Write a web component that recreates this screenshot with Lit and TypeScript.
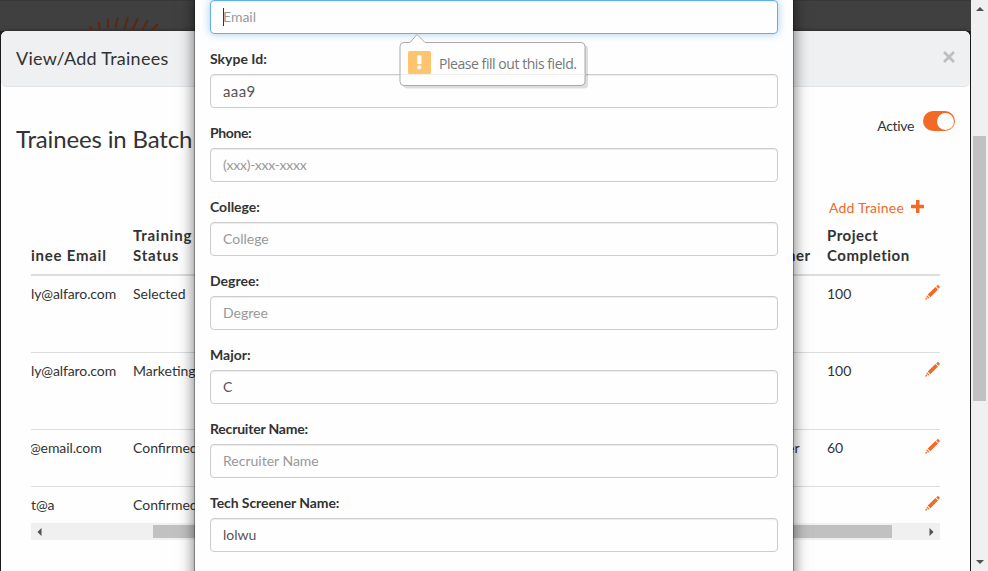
import { LitElement, html, css, svg } from "lit";
import { customElement } from "lit/decorators.js";

interface Field {
  label: string;
  value?: string;
  placeholder?: string;
  cls: string;
}

const FIELDS: Field[] = [
  { label: "Skype Id:", value: "aaa9", cls: "skype" },
  { label: "Phone:", placeholder: "(xxx)-xxx-xxxx", cls: "phone" },
  { label: "College:", placeholder: "College", cls: "college" },
  { label: "Degree:", placeholder: "Degree", cls: "degree" },
  { label: "Major:", value: "C", cls: "major" },
  { label: "Recruiter Name:", placeholder: "Recruiter Name", cls: "recruiter" },
  { label: "Tech Screener Name:", value: "lolwu", cls: "tech" },
];

const ROWS = [
  { email: "ly@alfaro.com", status: "Selected", screener: "", done: "100", cls: "r1" },
  { email: "ly@alfaro.com", status: "Marketing", screener: "", done: "100", cls: "r2" },
  { email: "@email.com", status: "Confirmed", screener: "er", done: "60", cls: "r3" },
  { email: "t@a", status: "Confirmed", screener: "", done: "", cls: "r4" },
];

const pencil = html`<svg class="pencil" width="15" height="15" viewBox="0 0 15 15">
  ${svg`<path fill="#f26a26" d="M11.200 1.400 12.300.3q.6-.5 1.100 0l1.200 1.200q.5.5 0 1.100L13.600 3.700zM10.400 2 13 4.600 5.300 12.200 2.700 9.600zM1.900 10.300 4.600 13 3.500 13.500 1.400 11.400zM1 12.200 2.700 13.900.2 14.800z"/>`}
</svg>`;

@customElement("app-root")
export class AppRoot extends LitElement {
  static styles = css`
    :host {
      display: flex;
      width: 988px;
      height: 571px;
      overflow: hidden;
      font-family: Lato, "Liberation Sans", sans-serif;
      font-size: 14px;
      line-height: 20px;
      color: #333;
      background: #212121;
    }
    * { box-sizing: border-box; }
    .stage { position: relative; width: 971px; height: 571px; overflow: hidden; }
    .top { height: 31px; background: #404040; border-top: 1px solid #393939; }
    .rays { display: block; margin-left: 84px; }
    .panel {
      margin: 0 1px;
      height: 540px;
      background: #fefefe;
      border-radius: 6px 6px 0 0;
      box-shadow: 0 0 4px rgba(0, 0, 0, 0.5);
    }
    .head {
      display: flex;
      justify-content: space-between;
      align-items: center;
      height: 56px;
      padding: 0 15px;
      background: #eff0f2;
      border-bottom: 1px solid #e3e4e5;
      border-radius: 6px;
    }
    .title { font-size: 18px; letter-spacing: 0.26px; margin-top: -1px; white-space: nowrap; }
    .close { margin-top: -4px; }
    .sub { display: flex; justify-content: space-between; padding: 0 15px; height: 112px; }
    .sub h2 {
      margin: 36px 0 0;
      font-size: 24px;
      line-height: 32px;
      font-weight: 400;
      letter-spacing: -0.15px;
      white-space: nowrap;
    }
    .active { display: flex; gap: 9px; padding-top: 24px; line-height: 30px; }
    .act { letter-spacing: -0.35px; }
    .toggle {
      width: 32px;
      height: 20px;
      padding: 1px;
      border-radius: 10px;
      background: #f26a26;
      display: flex;
      justify-content: flex-end;
    }
    .knob { width: 17px; height: 17px; margin-top: 0.5px; border-radius: 50%; background: #fefefe; }
    .add {
      display: flex;
      justify-content: flex-end;
      gap: 7px;
      padding-right: 46px;
      height: 27px;
      line-height: 18px;
      color: #f26a26;
    }
    .addt { letter-spacing: 0.2px; }
    .plus { margin-top: 1px; }
    .table { width: 909px; margin-left: 30px; overflow: hidden; white-space: nowrap; }
    .row {
      display: grid;
      grid-template-columns: 102px 640px 54px 98px 15px;
      border-top: 1px solid #ddd;
      padding-top: 8px;
    }
    .row.header {
      height: 49px;
      margin-top: -1px;
      padding: 0;
      align-items: end;
      border: 0;
      font-weight: 700;
      font-size: 15px;
      letter-spacing: 0.5px;
    }
    .wide { letter-spacing: 0.75px; }
    .header + .row { border-top: 2px solid #ddd; padding-top: 8px; }
    .r1 { height: 78px; }
    .r2 { height: 77px; }
    .r3 { height: 57px; }
    .r4 { height: 37px; }
    .email { letter-spacing: -0.1px; }
    .r3 .email { text-indent: -2px; }
    .pencil { margin-top: 1px; }
    .scr { padding-left: 14px; }
    .header > * { padding-bottom: 9px; }
    .hbar {
      display: flex;
      align-items: center;
      width: 909px;
      height: 17px;
      margin-left: 30px;
      background: #f0f0f0;
    }
    .hbar .thumb { width: 739px; height: 13px; margin: 0 37px 0 111px; background: #c1c1c1; }
    .hbar svg:first-child { margin-left: 6px; }
    .vbar {
      display: flex;
      flex-direction: column;
      align-items: center;
      width: 17px;
      height: 571px;
      background: #f0f0f0;
    }
    .vbar .thumb { width: 13px; height: 265px; margin: 125px 0 159px; background: #c1c1c1; }
    .vbar svg:first-child { margin-top: 7px; }
    .vbar svg, .hbar svg { flex: none; display: block; }
    .dialog {
      position: absolute;
      left: 195px;
      top: -10px;
      width: 598px;
      height: 600px;
      padding: 10px 15px 0;
      background: #fefefe;
      box-shadow: 0 0 0 1px rgba(0, 0, 0, 0.3), 0 5px 15px rgba(0, 0, 0, 0.6);
    }
    .input {
      display: flex;
      align-items: center;
      height: 34px;
      margin-bottom: 15px;
      padding: 0 12px;
      border: 1px solid #ccc;
      border-radius: 4px;
      color: #555;
      box-shadow: inset 0 1px 1px rgba(0, 0, 0, 0.075);
    }
    .input.focus {
      border-color: #66afe9;
      box-shadow: inset 0 1px 1px rgba(0, 0, 0, 0.075), 0 0 8px rgba(102, 175, 233, 0.6);
    }
    .hint { color: #999; }
    .v-phone { letter-spacing: -0.25px; }
    .v-skype { font-size: 15px; letter-spacing: 0.4px; line-height: 20px; margin-top: -1px; }
    .caret { width: 1px; height: 18px; background: #333; margin-right: -1px; }
    label { display: block; margin-bottom: 5px; font-weight: 700; white-space: nowrap; }
    .l-phone { letter-spacing: -0.4px; }
    .l-recruiter { letter-spacing: -0.2px; }
    .l-tech { letter-spacing: -0.08px; }
    .last { margin-top: -1px; letter-spacing: 0.5px; }
    .tip { position: absolute; left: 399px; top: 33px; }
    .bubble { display: block; }
    .tiptext {
      position: absolute;
      left: 40px;
      top: 21px;
      font: 14px/20px "Open Sans", "Noto Sans", sans-serif;
      letter-spacing: -0.45px;
      color: #777;
      white-space: nowrap;
    }
  `;

  render() {
    return html`
      <div class="stage">
        <div class="top">
          <svg class="rays" width="80" height="30" viewBox="84 1 80 30">
            <path stroke="#5a2810" stroke-width="2" fill="none"
              d="M90 26l2 6M98.500 22l1.500 7M108 19v9M118 17l-2.500 11M128 17l-4 13M138 18l-6 13M148 20.500l-6 10M158 24l-6 6" />
          </svg>
        </div>
        <div class="panel">
          <div class="head">
            <span class="title">View/Add Trainees</span>
            <svg class="close" width="12" height="12" viewBox="0 0 12 12">
              <path d="M1 1l10 10M11 1L1 11" stroke="#bdbebf" stroke-width="2.600" />
            </svg>
          </div>
          <div class="sub">
            <h2>Trainees in Batch</h2>
            <div class="active"><span class="act">Active</span><span class="toggle"><span class="knob"></span></span></div>
          </div>
          <div class="add">
            <span class="addt">Add Trainee</span>
            <svg class="plus" width="13" height="13" viewBox="0 0 13 13">
              <path d="M5 0h3.500v4.800H13v3.400H8.500V13H5V8.200H0V4.800h5z" fill="#f26a26" />
            </svg>
          </div>
          <div class="table">
            <div class="row header">
              <span class="wide">inee Email</span>
              <span class="wide">Training<br />Status</span>
              <span class="scr">ner</span>
              <span>Project<br />Completion</span>
              <span></span>
            </div>
            ${ROWS.map(
              (r) => html`<div class="row ${r.cls}">
                <span class="email">${r.email}</span>
                <span class="status">${r.status}</span>
                <span class="scr">${r.screener}</span>
                <span class="done">${r.done}</span>
                ${pencil}
              </div>`
            )}
          </div>
          <div class="hbar">
            <svg width="5" height="8" viewBox="0 0 5 8"><path d="M4.500 0v8L.5 4z" fill="#505050" /></svg>
            <div class="thumb"></div>
            <svg width="5" height="8" viewBox="0 0 5 8"><path d="M.5 0v8l4-4z" fill="#505050" /></svg>
          </div>
        </div>
        <div class="dialog">
          <div class="input focus"><span class="caret"></span><span class="hint">Email</span></div>
          ${FIELDS.map(
            (f) => html`<label><span class="l-${f.cls}">${f.label}</span></label>
              <div class="input">
                <span class="${f.value ? "" : "hint"} v-${f.cls}">${f.value ?? f.placeholder}</span>
              </div>`
          )}
          <label class="last">Project Completion:</label>
        </div>
        <div class="tip">
          <svg class="bubble" width="194" height="60" viewBox="0 0 194 60">
            <path d="M8 12h177q4 0 4 4v35.500q0 4-4 4H8q-3 0-4-3z" fill="#000" opacity=".13" />
            <path d="M5 9.500h6l7-8 8 8h156q4 0 4 4v35q0 4-4 4H5q-4 0-4-4V13.500q0-4 4-4z" fill="#fefefe" stroke="#aaa" />
            <path d="M2 41.500h184" stroke="#eee" />
            <rect x="9" y="18" width="23" height="23" rx="1.500" fill="#ffc56e" />
            <path d="M18.200 22.500h4.200v8.500h-4.200z" fill="#fff" />
            <circle cx="20.300" cy="34.300" r="2.100" fill="#fff" />
          </svg>
          <span class="tiptext">Please fill out this field.</span>
        </div>
      </div>
      <div class="vbar">
        <svg width="8" height="4" viewBox="0 0 8 4"><path d="M0 4h8L4 0z" fill="#505050" /></svg>
        <div class="thumb"></div>
        <svg width="8" height="4" viewBox="0 0 8 4"><path d="M0 0h8L4 4z" fill="#505050" /></svg>
      </div>
    `;
  }
}
